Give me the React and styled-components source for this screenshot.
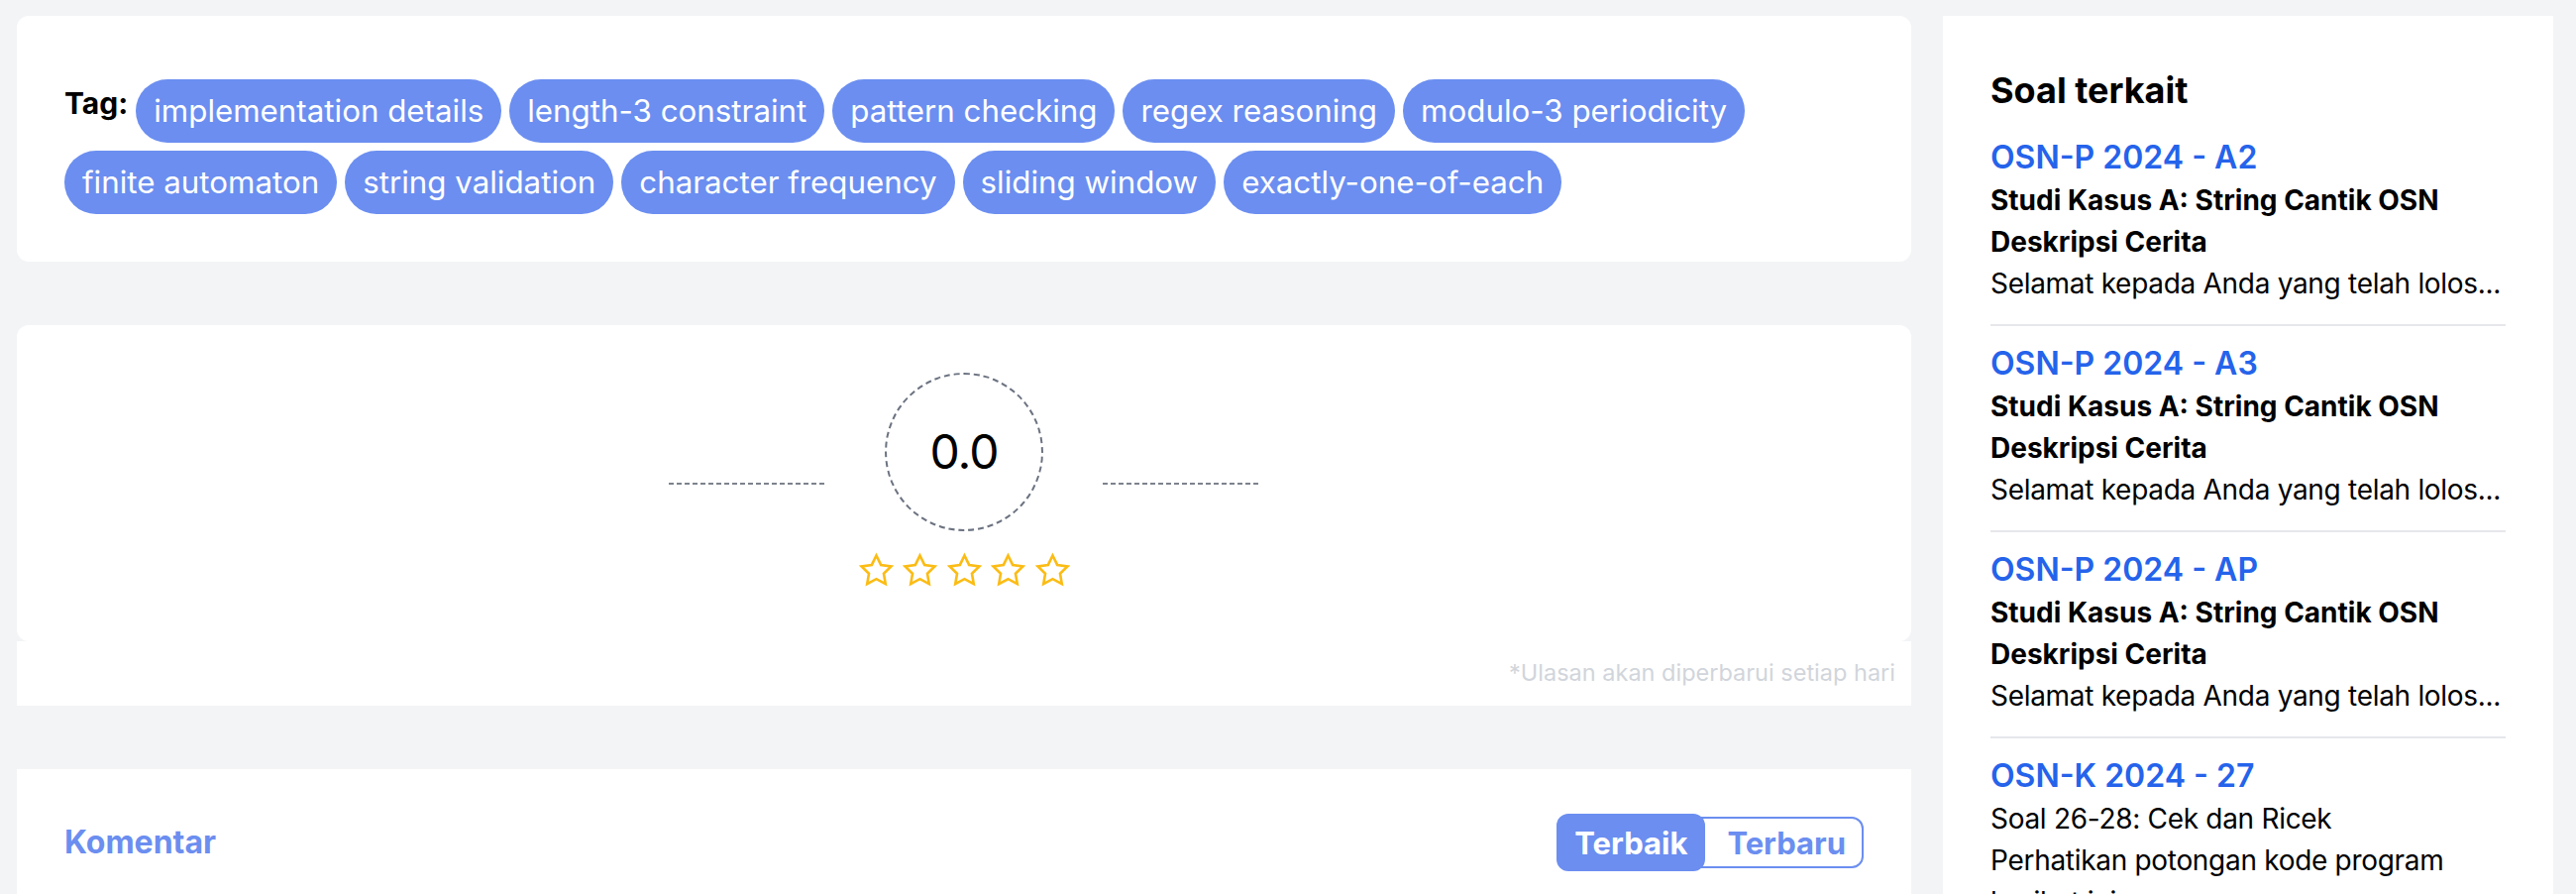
import React from 'react';
import styled, { createGlobalStyle } from 'styled-components';

const Global = createGlobalStyle`
  html, body { margin: 0; padding: 0; background: #f3f4f6; overflow: hidden; }
  body { font-family: Inter, "Noto Sans", sans-serif; color: #000; }
  * { box-sizing: border-box; }
`;

const Page = styled.div`
  display: flex;
  align-items: flex-start;
  gap: 32px;
  padding: 16px 23px 0 17px;
  min-height: 902px;
`;

const Main = styled.main`
  flex: 1;
  min-width: 0;
  display: flex;
  flex-direction: column;
  gap: 64px;
`;

const Card = styled.section`
  background: #fff;
  border-radius: ${p => (p.$square ? '0' : '12px')};
  padding: ${p => p.$pad};
  min-height: ${p => p.$minH || 'auto'};
`;

const TagRow = styled.div`
  display: flex;
  flex-wrap: wrap;
  align-items: flex-start;
  gap: 8px;
`;

const TagLabel = styled.span`
  font-size: 30px;
  font-weight: 700;
  line-height: 48px;
`;

const Chip = styled.span`
  display: inline-flex;
  align-items: center;
  height: 64px;
  padding: 0 18px;
  border-radius: 9999px;
  background: #6b8ef0;
  color: #fff;
  font-size: 31.3px;
  line-height: 48px;
  white-space: nowrap;
`;

const RatingWrap = styled.div`
  display: flex;
  flex-direction: column;
`;

const ScoreRow = styled.div`
  display: flex;
  align-items: center;
  justify-content: center;
  gap: 60px;
`;

const DashLine = styled.div`
  width: 158px;
  height: 2px;
  margin-top: 64px;
  background: repeating-linear-gradient(to right, #7d838d 0 5px, transparent 5px 8px);
`;

const ScoreCircle = styled.div`
  width: 160px;
  height: 160px;
  border-radius: 50%;
  border: 2px dashed #6b7280;
  display: flex;
  align-items: center;
  justify-content: center;
  font-size: 48px;
  line-height: 1;
  font-weight: 400;
  letter-spacing: -1px;
`;

const Stars = styled.div`
  display: flex;
  justify-content: center;
  gap: 7.5px;
  margin-top: 21px;
`;

const Footnote = styled.div`
  background: #fff;
  padding: 16px 16px 17px;
  text-align: right;
  font-size: 23.5px;
  line-height: 32px;
  color: #d1d5db;
`;

const CommentHead = styled.div`
  display: flex;
  align-items: center;
  justify-content: space-between;
`;

const CommentTitle = styled.h3`
  margin: 0;
  font-size: 32px;
  line-height: 40px;
  font-weight: 700;
  color: #6b8ef0;
`;

const Toggle = styled.div`
  display: flex;
  align-items: center;
  height: 52px;
  border: 2px solid #6b8ef0;
  border-radius: 12px;
`;

const ToggleBtn = styled.button`
  font-family: inherit;
  font-size: 31px;
  font-weight: 700;
  border: 0;
  cursor: pointer;
  display: flex;
  align-items: center;
  border-radius: 12px;
  height: ${p => (p.$active ? '58px' : '48px')};
  margin-left: ${p => (p.$active ? '-4px' : '4px')};
  padding: ${p => (p.$active ? '0 18px' : '0 16px 0 18px')};
  background: ${p => (p.$active ? '#6b8ef0' : 'transparent')};
  color: ${p => (p.$active ? '#fff' : '#6b8ef0')};
`;

const Sidebar = styled.aside`
  width: 616px;
  flex-shrink: 0;
  background: #fff;
  padding: 55px 48px 0;
  min-height: 1200px;
`;

const SideTitle = styled.h2`
  margin: 0 0 10px;
  font-size: 36px;
  line-height: 40px;
  font-weight: 700;
`;

const Item = styled.div`
  padding: 16px 0 20px;
  border-bottom: 2px solid #e5e7eb;
`;

const ItemTitle = styled.a`
  display: block;
  font-size: 32px;
  line-height: 44px;
  font-weight: 600;
  color: #2563eb;
  text-decoration: none;
`;

const ItemLine = styled.div`
  font-size: 28px;
  line-height: 42px;
  font-weight: ${p => (p.$bold ? 700 : 400)};
  letter-spacing: ${p => (p.$bold ? '0' : '-0.3px')};
  white-space: nowrap;
  overflow: hidden;
  text-overflow: ellipsis;
`;

const tags = [
  'implementation details',
  'length-3 constraint',
  'pattern checking',
  'regex reasoning',
  'modulo-3 periodicity',
  'finite automaton',
  'string validation',
  'character frequency',
  'sliding window',
  'exactly-one-of-each',
];

const excerpt = 'Selamat kepada Anda yang telah lolos...';

const related = [
  {
    title: 'OSN-P 2024 - A2',
    lines: [
      ['Studi Kasus A: String Cantik OSN', true],
      ['Deskripsi Cerita', true],
      [excerpt, false],
    ],
  },
  {
    title: 'OSN-P 2024 - A3',
    lines: [
      ['Studi Kasus A: String Cantik OSN', true],
      ['Deskripsi Cerita', true],
      [excerpt, false],
    ],
  },
  {
    title: 'OSN-P 2024 - AP',
    lines: [
      ['Studi Kasus A: String Cantik OSN', true],
      ['Deskripsi Cerita', true],
      [excerpt, false],
    ],
  },
  {
    title: 'OSN-K 2024 - 27',
    lines: [
      ['Soal 26-28: Cek dan Ricek', false],
      ['Perhatikan potongan kode program', false],
      ['berikut ini.', false],
    ],
  },
];

const StarIcon = () => (
  <svg width="37" height="37" viewBox="0 0 24 24" fill="none" stroke="#fbbc15" strokeWidth="1.7" strokeLinejoin="miter">
    <polygon points="12,2.3 15,8.4 21.7,9.4 16.85,14.1 18,20.8 12,17.65 6,20.8 7.15,14.1 2.3,9.4 9,8.4" />
  </svg>
);

export default function App() {
  return (
    <>
      <Global />
      <Page>
        <Main>
          <Card $pad="64px 48px 48px">
            <TagRow>
              <TagLabel>Tag:</TagLabel>
              {tags.map(t => (
                <Chip key={t}>{t}</Chip>
              ))}
            </TagRow>
          </Card>

          <RatingWrap>
            <Card $pad="48px 48px 53px">
              <ScoreRow>
                <DashLine />
                <ScoreCircle>0.0</ScoreCircle>
                <DashLine />
              </ScoreRow>
              <Stars>
                {[0, 1, 2, 3, 4].map(i => (
                  <StarIcon key={i} />
                ))}
              </Stars>
            </Card>
            <Footnote>*Ulasan akan diperbarui setiap hari</Footnote>
          </RatingWrap>

          <Card $square $pad="48px 48px" $minH="400px">
            <CommentHead>
              <CommentTitle>Komentar</CommentTitle>
              <Toggle>
                <ToggleBtn $active>Terbaik</ToggleBtn>
                <ToggleBtn>Terbaru</ToggleBtn>
              </Toggle>
            </CommentHead>
          </Card>
        </Main>

        <Sidebar>
          <SideTitle>Soal terkait</SideTitle>
          {related.map(r => (
            <Item key={r.title}>
              <ItemTitle href="#">{r.title}</ItemTitle>
              {r.lines.map(([txt, bold], i) => (
                <ItemLine key={i} $bold={bold}>{txt}</ItemLine>
              ))}
            </Item>
          ))}
        </Sidebar>
      </Page>
    </>
  );
}
